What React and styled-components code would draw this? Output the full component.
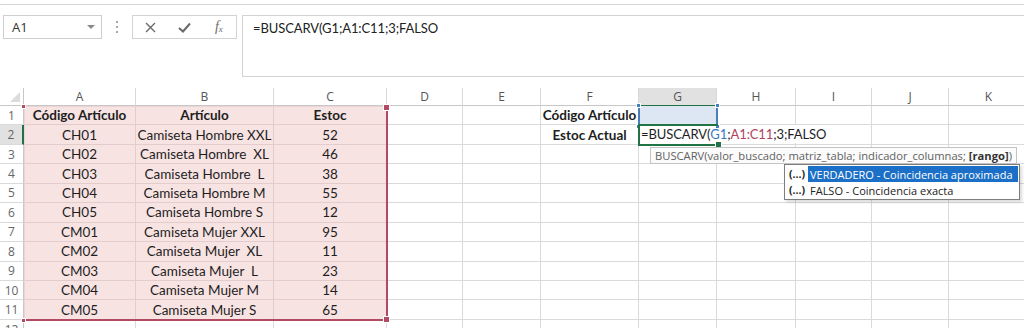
import React from 'react';
import styled, { createGlobalStyle } from 'styled-components';

const GlobalStyle = createGlobalStyle`
  body {
    margin: 0;
    background: #ffffff;
    font-family: "Lato", "Open Sans", sans-serif;
  }
`;

const COLS = [24, 112, 138, 113, 76, 78, 98, 78, 79, 76, 77, 80];
const LETTERS = ['', 'A', 'B', 'C', 'D', 'E', 'F', 'G', 'H', 'I', 'J', 'K'];
const HEAD_H = 18;
const ROW_H = 19.45;

const data = [
  ['Código Artículo', 'Artículo', 'Estoc'],
  ['CH01', 'Camiseta Hombre XXL', '52'],
  ['CH02', 'Camiseta Hombre  XL', '46'],
  ['CH03', 'Camiseta Hombre  L', '38'],
  ['CH04', 'Camiseta Hombre M', '55'],
  ['CH05', 'Camiseta Hombre S', '12'],
  ['CM01', 'Camiseta Mujer XXL', '95'],
  ['CM02', 'Camiseta Mujer  XL', '11'],
  ['CM03', 'Camiseta Mujer  L', '23'],
  ['CM04', 'Camiseta Mujer M', '14'],
  ['CM05', 'Camiseta Mujer S', '65'],
];

const Page = styled.div`
  width: 1024px;
  height: 328px;
  overflow: hidden;
  background: #fff;
`;

const TopStrip = styled.div`
  height: 4px;
  border-bottom: 1px solid #d6d6d6;
`;

const FormulaRow = styled.div`
  display: flex;
  align-items: flex-start;
  height: 83px;
  box-sizing: border-box;
  padding: 10px 0 0 3px;
`;

const NameBox = styled.div`
  width: 99px;
  height: 24px;
  box-sizing: border-box;
  border: 1px solid #cfcfcf;
  display: flex;
  align-items: center;
  justify-content: space-between;
  padding: 0 6px 0 8px;
  font-family: "Open Sans", sans-serif;
  font-size: 13px;
  color: #333;
`;

const Caret = styled.span`
  width: 0;
  height: 0;
  border-left: 4px solid transparent;
  border-right: 4px solid transparent;
  border-top: 4px solid #8a8a8a;
`;

const Dots = styled.div`
  width: 30px;
  height: 24px;
  display: flex;
  flex-direction: column;
  align-items: center;
  justify-content: center;
  gap: 3px;

  span {
    width: 2px;
    height: 2px;
    background: #a8a8a8;
  }
`;

const ButtonGroup = styled.div`
  width: 105px;
  height: 24px;
  box-sizing: border-box;
  border: 1px solid #d3d3d3;
  display: grid;
  grid-template-columns: repeat(3, 1fr);
  align-items: center;
  justify-items: center;
  color: #6a6a6a;
`;

const Fx = styled.span`
  font-family: "Liberation Serif", serif;
  font-style: italic;
  font-size: 14px;
  color: #6a6a6a;

  sub {
    font-size: 9px;
    vertical-align: -1px;
  }
`;

const FormulaBox = styled.div`
  flex: 1;
  height: 62px;
  margin-left: 5px;
  margin-right: -10px;
  box-sizing: border-box;
  border: 1px solid #d3d3d3;
  padding: 4px 10px;
  font-size: 13px;
  letter-spacing: -0.1px;
  color: #222;
`;

const GridWrap = styled.div`
  position: relative;
`;

const Grid = styled.div`
  display: grid;
  grid-template-columns: ${COLS.map((c) => c + 'px').join(' ')};
  grid-template-rows: ${HEAD_H}px repeat(12, ${ROW_H}px);
`;

const Cell = styled.div`
  box-sizing: border-box;
  border-right: 1px solid ${(p) => (p.$pink ? '#e3cccc' : '#dadada')};
  border-bottom: 1px solid ${(p) => (p.$pink ? '#e3cccc' : '#dadada')};
  background: ${(p) => (p.$pink ? '#f8e3e3' : p.$blue ? '#dde7f4' : '#fff')};
  display: flex;
  align-items: center;
  justify-content: center;
  white-space: pre;
  font-size: 13.5px;
  font-weight: ${(p) => (p.$bold ? 700 : 400)};
  color: #1e1e1e;
  position: relative;
  z-index: ${(p) => (p.$over ? 2 : 0)};
`;

const ColHead = styled.div`
  box-sizing: border-box;
  border-right: 1px solid #d8d8d8;
  border-bottom: 1px solid ${(p) => (p.$active ? '#217346' : '#c8c8c8')};
  background: ${(p) => (p.$active ? '#e1e1e1' : '#fff')};
  display: flex;
  align-items: center;
  justify-content: center;
  font-family: "Open Sans", sans-serif;
  font-size: 12px;
  color: #555;
`;

const RowHead = styled.div`
  box-sizing: border-box;
  border-right: ${(p) => (p.$active ? '2px solid #217346' : '1px solid #c8c8c8')};
  border-bottom: 1px solid #dadada;
  background: ${(p) => (p.$active ? '#e1e1e1' : '#fff')};
  display: flex;
  align-items: center;
  justify-content: center;
  font-family: "Open Sans", sans-serif;
  font-size: 12px;
  color: #666;
`;

const Corner = styled.div`
  box-sizing: border-box;
  border-right: 1px solid #c8c8c8;
  border-bottom: 1px solid #c8c8c8;
  position: relative;

  &::after {
    content: '';
    position: absolute;
    right: 3px;
    bottom: 3px;
    width: 0;
    height: 0;
    border-left: 10px solid transparent;
    border-bottom: 10px solid #dcdcdc;
  }
`;

const EditText = styled.span`
  position: absolute;
  left: 2px;
  top: 0;
  bottom: 1px;
  display: flex;
  align-items: center;
  padding-right: 6px;
  background: #fff;
  font-size: 13px;
  letter-spacing: -0.1px;
  color: #1e1e1e;
  white-space: nowrap;
`;

const Ref = styled.span`
  color: ${(p) => p.$c};
`;

const RangeBox = styled.div`
  position: absolute;
  left: ${(p) => p.$x}px;
  top: ${(p) => p.$y}px;
  width: ${(p) => p.$w}px;
  height: ${(p) => p.$h}px;
  box-sizing: border-box;
  pointer-events: none;
  z-index: 3;
`;

const RedRange = styled(RangeBox)`
  border-right: 2px solid #b24a63;
  border-bottom: 2px solid #b24a63;
  border-left: 1px solid #ecd3d8;
  border-top: 1px solid #ecd3d8;
`;

const BlueRange = styled(RangeBox)`
  border-left: 2px solid #4a7ebb;
  border-right: 2px solid #4a7ebb;
`;

const ActiveBox = styled(RangeBox)`
  border: 2px solid #217346;
  border-right: none;
  z-index: 4;
`;

const Handle = styled.i`
  position: absolute;
  width: ${(p) => (p.$small ? 3 : 5)}px;
  height: ${(p) => (p.$small ? 3 : 5)}px;
  background: ${(p) => p.$c};
  border: 1px solid #fff;
  ${(p) => (p.$top ? 'top: -3px;' : 'bottom: -4px;')}
  ${(p) => (p.$left ? 'left: -4px;' : 'right: -4px;')}
`;

const Tip = styled.div`
  position: absolute;
  left: 650px;
  top: 59px;
  height: 17px;
  box-sizing: border-box;
  border: 1px solid #c4c4c4;
  background: #fbfbfb;
  padding: 0 4px;
  display: flex;
  align-items: center;
  font-family: "Open Sans", sans-serif;
  font-size: 11.2px;
  color: #616161;
  white-space: pre;
  z-index: 5;

  b {
    color: #333;
  }
`;

const Menu = styled.div`
  position: absolute;
  left: 784px;
  top: 76px;
  width: 236px;
  box-sizing: border-box;
  border: 1px solid #7d7d7d;
  background: #fff;
  padding: 1px;
  box-shadow: 2px 2px 3px rgba(0, 0, 0, 0.15);
  z-index: 6;
`;

const MenuItem = styled.div`
  display: flex;
  align-items: center;
  height: 16px;
  font-family: "Open Sans", sans-serif;
  font-size: 11px;
  white-space: nowrap;
`;

const ItemIcon = styled.span`
  width: 19px;
  padding-left: 3px;
  font-size: 10.5px;
  font-weight: 700;
  color: #222;
`;

const ItemText = styled.span`
  flex: 1;
  height: 100%;
  display: flex;
  align-items: center;
  padding-left: 2px;
  overflow: hidden;
  background: ${(p) => (p.$sel ? '#1c6fc6' : 'transparent')};
  color: ${(p) => (p.$sel ? '#fff' : '#222')};
`;

const CrossIcon = () => (
  <svg width="11" height="11" viewBox="0 0 11 11">
    <path d="M1 1L10 10M10 1L1 10" stroke="#6a6a6a" strokeWidth="1.4" />
  </svg>
);

const CheckIcon = () => (
  <svg width="13" height="11" viewBox="0 0 13 11">
    <path d="M1 6L5 9.5L12 1.5" stroke="#6a6a6a" strokeWidth="2" fill="none" />
  </svg>
);

export default function App() {
  const rows = [];
  for (let r = 0; r < 12; r++) {
    const line = [];
    line.push(
      <RowHead key="h" $active={r === 1}>
        {r + 1}
      </RowHead>
    );
    for (let c = 1; c < 12; c++) {
      const inTable = r < 11 && c <= 3;
      let text = inTable ? data[r][c - 1] : '';
      let bold = inTable && r === 0;
      if (c === 6 && r === 0) {
        text = 'Código Artículo';
        bold = true;
      }
      if (c === 6 && r === 1) {
        text = 'Estoc Actual';
        bold = true;
      }
      line.push(
        <Cell
          key={c}
          $pink={inTable}
          $blue={c === 7 && r === 0}
          $bold={bold}
          $over={c === 7 && r === 1}
        >
          {text}
          {c === 7 && r === 1 && (
            <EditText>
              =BUSCARV(<Ref $c="#3a78c3">G1</Ref>;<Ref $c="#b0425e">A1:C11</Ref>;3;FALSO
            </EditText>
          )}
        </Cell>
      );
    }
    rows.push(line);
  }

  const xOf = (c) => COLS.slice(0, c).reduce((a, b) => a + b, 0);

  return (
    <Page>
      <GlobalStyle />
      <TopStrip />
      <FormulaRow>
        <NameBox>
          A1
          <Caret />
        </NameBox>
        <Dots>
          <span />
          <span />
          <span />
        </Dots>
        <ButtonGroup>
          <CrossIcon />
          <CheckIcon />
          <Fx>
            f<sub>x</sub>
          </Fx>
        </ButtonGroup>
        <FormulaBox>=BUSCARV(G1;A1:C11;3;FALSO</FormulaBox>
      </FormulaRow>

      <GridWrap>
        <Grid>
          <Corner />
          {LETTERS.slice(1).map((l) => (
            <ColHead key={l} $active={l === 'G'}>
              {l}
            </ColHead>
          ))}
          {rows}
        </Grid>

        <RedRange $x={xOf(1)} $y={HEAD_H} $w={xOf(4) - xOf(1) + 1} $h={ROW_H * 11 + 1}>
          <Handle $c="#b24a63" $small $top $left />
          <Handle $c="#b24a63" $top />
          <Handle $c="#b24a63" $small $left />
          <Handle $c="#b24a63" />
        </RedRange>

        <BlueRange $x={xOf(7) - 1} $y={HEAD_H} $w={COLS[7] + 2} $h={ROW_H}>
          <Handle $c="#4a7ebb" $small $top $left />
          <Handle $c="#4a7ebb" $small $top />
          <Handle $c="#4a7ebb" $small $left />
          <Handle $c="#4a7ebb" $small />
        </BlueRange>

        <ActiveBox $x={xOf(7) - 1} $y={HEAD_H + ROW_H - 1} $w={COLS[7] + 2} $h={ROW_H + 2}>
          <Handle $c="#217346" />
        </ActiveBox>

        <Tip>
          BUSCARV(valor_buscado; matriz_tabla; indicador_columnas; <b>[rango]</b>)
        </Tip>

        <Menu>
          <MenuItem>
            <ItemIcon>(...)</ItemIcon>
            <ItemText $sel>VERDADERO - Coincidencia aproximada</ItemText>
          </MenuItem>
          <MenuItem>
            <ItemIcon>(...)</ItemIcon>
            <ItemText>FALSO - Coincidencia exacta</ItemText>
          </MenuItem>
        </Menu>
      </GridWrap>
    </Page>
  );
}
